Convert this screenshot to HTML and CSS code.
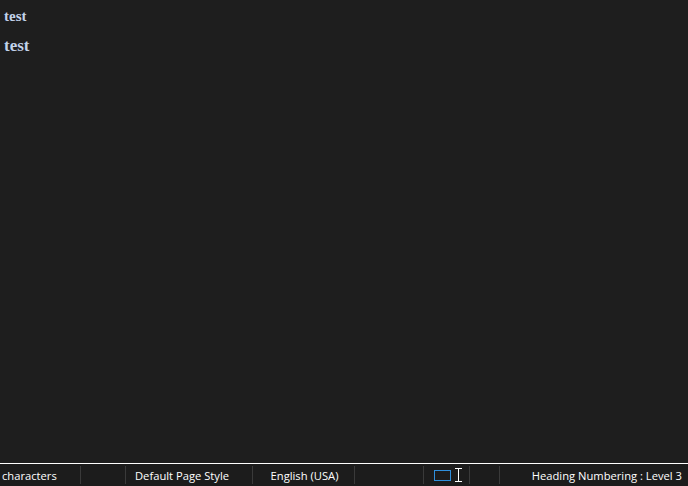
FILE: index.html
```html
<!DOCTYPE html>
<html>
<head>
<meta charset="utf-8">
<link rel="stylesheet" href="styles.css">
</head>
<body>
<div class="app">
  <main class="doc">
    <p class="h1">test</p>
    <p class="h2">test</p>
  </main>
  <footer class="status">
    <div class="seg s1">characters</div>
    <div class="seg s2"></div>
    <div class="seg s3">Default Page Style</div>
    <div class="seg s4">English (USA)</div>
    <div class="seg s5"></div>
    <div class="seg s6">
      <span class="sel-rect"></span>
      <svg class="ibeam" width="7" height="14" viewBox="0 0 7 14"><path d="M0 0.5H7M3.5 0.5V13.5M0 13.5H7" stroke="#ffffff" stroke-width="1" fill="none"/></svg>
    </div>
    <div class="seg s7"></div>
    <div class="seg s8">Heading Numbering : Level 3</div>
  </footer>
</div>
</body>
</html>
```

FILE: styles.css
```css
html, body {
  margin: 0;
  padding: 0;
  background: #1e1e1e;
}
.app {
  width: 688px;
  height: 486px;
  display: flex;
  flex-direction: column;
  background: #1e1e1e;
}
.doc {
  flex: 1;
  padding: 6px 0 0 4px;
}
.doc p {
  margin: 0;
  font-family: "Liberation Serif", "DejaVu Serif", serif;
  font-weight: bold;
  color: #c2d2ea;
}
.h1 {
  font-size: 15px;
  line-height: 20px;
}
.h2 {
  font-size: 17px;
  line-height: 20px;
  margin-top: 10px !important;
}
.status {
  height: 22px;
  border-top: 1px solid #ffffff;
  background: #1c1c1c;
  display: flex;
  align-items: stretch;
  font-family: "Open Sans", "Noto Sans", sans-serif;
  font-size: 11.2px;
  color: #ffffff;
}
.seg {
  display: flex;
  align-items: center;
  white-space: nowrap;
  overflow: hidden;
  border-left: 1px solid #3a3a3a;
  margin: 2px 0;
  box-sizing: border-box;
}
.s1 { width: 80px; border-left: none; padding-left: 2px; }
.s2 { width: 45px; }
.s3 { width: 127px; padding-left: 9px; }
.s4 { width: 102px; justify-content: center; padding-left: 2px; }
.s5 { width: 69px; }
.s6 { width: 46px; padding-left: 10px; gap: 4px; }
.s7 { width: 30px; }
.s8 { flex: 1; justify-content: flex-end; padding-right: 6px; }
.sel-rect {
  width: 15px;
  height: 9px;
  border: 1px solid #2f8fdc;
}
.ibeam { display: block; }
```
